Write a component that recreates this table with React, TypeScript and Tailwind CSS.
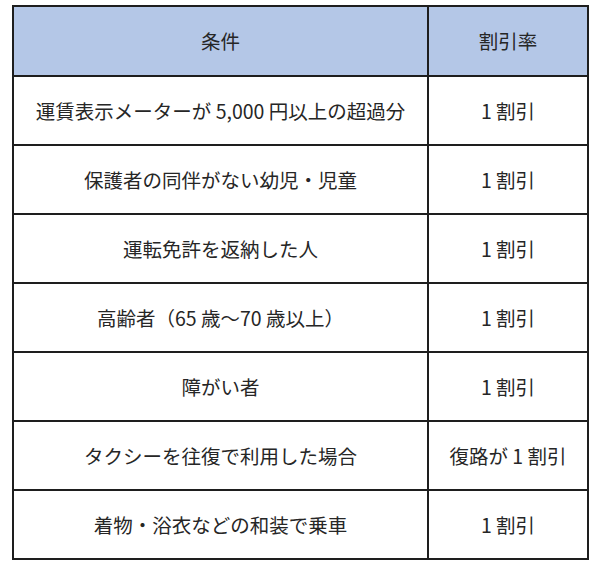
const rows: [string, string][] = [
  ["運賃表示メーターが 5,000 円以上の超過分", "1 割引"],
  ["保護者の同伴がない幼児・児童", "1 割引"],
  ["運転免許を返納した人", "1 割引"],
  ["高齢者（65 歳～70 歳以上）", "1 割引"],
  ["障がい者", "1 割引"],
  ["タクシーを往復で利用した場合", "復路が 1 割引"],
  ["着物・浴衣などの和装で乗車", "1 割引"],
];

export default function App() {
  return (
    <div className="w-[600px] h-[566px] bg-white pt-[5px] pl-[12px] font-['Noto_Sans_CJK_JP','Noto_Sans',sans-serif] text-[#262626]">
      <table className="border-collapse border-2 border-[#1e1e1e] w-[577px] text-[19.5px]">
        <thead>
          <tr className="h-[70px] bg-[#b4c7e7]">
            <th className="w-[415px] border-2 border-[#1e1e1e] font-normal text-center">条件</th>
            <th className="border-2 border-[#1e1e1e] font-normal text-center">割引率</th>
          </tr>
        </thead>
        <tbody>
          {rows.map(([cond, rate], i) => (
            <tr key={i} className="h-[69px]">
              <td className="border-2 border-[#1e1e1e] text-center whitespace-nowrap">{cond}</td>
              <td className="border-2 border-[#1e1e1e] text-center whitespace-nowrap">{rate}</td>
            </tr>
          ))}
        </tbody>
      </table>
    </div>
  );
}
